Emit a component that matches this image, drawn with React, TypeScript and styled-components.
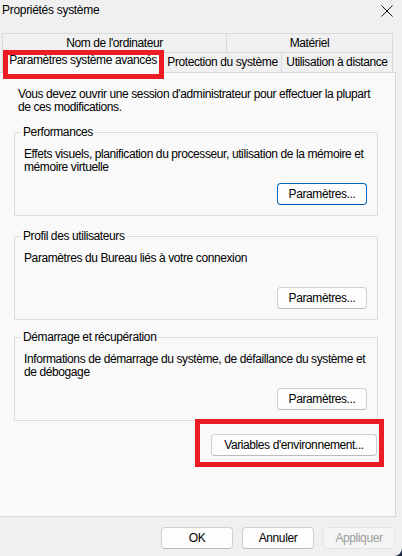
import styled, { createGlobalStyle } from 'styled-components';

const GlobalStyle = createGlobalStyle`
  html, body {
    margin: 0;
    padding: 0;
    background: #1e2a44;
  }
  body {
    font-family: 'Liberation Sans', Arial, sans-serif;
    font-size: 12px;
    letter-spacing: -0.4px;
    color: #000;
  }
`;

const groups = [
  {
    title: 'Performances',
    text: 'Effets visuels, planification du processeur, utilisation de la mémoire et mémoire virtuelle',
    mt: 12,
    focused: true,
  },
  {
    title: 'Profil des utilisateurs',
    text: 'Paramètres du Bureau liés à votre connexion',
    mt: 14,
    focused: false,
  },
  {
    title: 'Démarrage et récupération',
    text: 'Informations de démarrage du système, de défaillance du système et de débogage',
    mt: 11,
    focused: false,
  },
];

const App = () => {
  return (
    <Window>
      <GlobalStyle />
      <TitleBar>
        <Title>Propriétés système</Title>
        <Close aria-label="Fermer">
          <svg width="12" height="12" viewBox="0 0 12 12">
            <path d="M0.5 0.5 L11.5 11.5 M11.5 0.5 L0.5 11.5" stroke="#1a1a1a" strokeWidth="1" fill="none" />
          </svg>
        </Close>
      </TitleBar>

      <TabStrip>
        <TabRow>
          <Tab $w={225}>Nom de l'ordinateur</Tab>
          <Tab $w={167}>Matériel</Tab>
        </TabRow>
        <TabRow>
          <Tab $w={162} $active>Paramètres système avancés</Tab>
          <Tab $w={119}>Protection du système</Tab>
          <Tab $w={112}>Utilisation à distance</Tab>
        </TabRow>
      </TabStrip>

      <Panel>
        <Intro>
          Vous devez ouvrir une session d'administrateur pour effectuer la plupart
          <br />
          de ces modifications.
        </Intro>

        {groups.map((g) => (
          <GroupBox key={g.title} $mt={g.mt}>
            <Legend>{g.title}</Legend>
            <Description>{g.text}</Description>
            <ButtonRow>
              <Button $w={90} $focused={g.focused}>Paramètres...</Button>
            </ButtonRow>
          </GroupBox>
        ))}

        <EnvRow>
          <Button $w={166}>Variables d'environnement...</Button>
        </EnvRow>
      </Panel>

      <Footer>
        <Button $w={72}>OK</Button>
        <Button $w={72}>Annuler</Button>
        <Button $w={72} disabled>
          Appliquer
        </Button>
      </Footer>

      <Highlight $x={3} $y={50} $w={161} $h={29} />
      <Highlight $x={195} $y={419} $w={189} $h={48} />
    </Window>
  );
};

export default App;

const Window = styled.div`
  position: relative;
  width: 402px;
  height: 556px;
  background: #f0f0f0;
  border-bottom-right-radius: 8px;
  overflow: hidden;
  display: flex;
  flex-direction: column;
`;

const TitleBar = styled.div`
  height: 33px;
  display: flex;
  justify-content: space-between;
  align-items: flex-start;
  padding: 3px 9px 0 2px;
  box-sizing: border-box;
`;

const Title = styled.div`
  line-height: 14px;
  letter-spacing: -0.3px;
`;

const Close = styled.div`
  width: 12px;
  height: 12px;
  margin-top: 2px;
  display: flex;

  svg {
    display: block;
  }
`;

const TabStrip = styled.div`
  display: flex;
  flex-direction: column;
  padding-left: 2px;
`;

const TabRow = styled.div`
  display: flex;
  align-items: flex-start;
  height: 19px;

  & + & {
    height: 20px;
  }
`;

const Tab = styled.div<{ $w: number; $active?: boolean }>`
  box-sizing: border-box;
  width: ${(p) => p.$w}px;
  height: ${(p) => (p.$active ? 23 : 20)}px;
  margin-left: -1px;
  border: 1px solid #d9d9d9;
  border-bottom: none;
  background: ${(p) => (p.$active ? '#f9f9f9' : '#f0f0f0')};
  display: flex;
  align-items: center;
  justify-content: center;
  line-height: 13px;
  white-space: nowrap;
  position: relative;
  z-index: ${(p) => (p.$active ? 1 : 0)};
  margin-top: ${(p) => (p.$active ? -2 : 0)}px;
  padding-bottom: ${(p) => (p.$active ? 3 : 0)}px;

  &:first-child {
    margin-left: 0;
  }
`;

const Panel = styled.div`
  box-sizing: border-box;
  width: 396px;
  height: 445px;
  background: #f9f9f9;
  border-top: 1px solid #d9d9d9;
  border-right: 1px solid #d9d9d9;
  border-bottom: 1px solid #d9d9d9;
  padding: 15px 17px 0 14px;
  display: flex;
  flex-direction: column;
`;

const Intro = styled.p`
  margin: 0 0 0 4px;
  line-height: 13px;
`;

const GroupBox = styled.fieldset<{ $mt: number }>`
  margin: ${(p) => p.$mt}px 0 0;
  min-width: 0;
  padding: 9px 8px 10px 9px;
  border: 1px solid #dcdcdc;
  display: flex;
  flex-direction: column;
`;

const Legend = styled.legend`
  padding: 0 2px;
  margin-left: -3px;
  line-height: 13px;
`;

const Description = styled.div`
  min-height: 26px;
  line-height: 13px;
`;

const ButtonRow = styled.div`
  display: flex;
  justify-content: flex-end;
  margin: 9px 2px 0 0;
`;

const EnvRow = styled.div`
  display: flex;
  justify-content: flex-end;
  margin: 13px 1px 0 0;
`;

const Button = styled.button<{ $w: number; $focused?: boolean }>`
  box-sizing: border-box;
  width: ${(p) => p.$w}px;
  height: 22px;
  padding: 0;
  font: inherit;
  letter-spacing: inherit;
  color: #000;
  background: #fdfdfd;
  border: 1px solid ${(p) => (p.$focused ? '#0067c0' : '#d0d0d0')};
  border-bottom-color: ${(p) => (p.$focused ? '#0059a8' : '#bcbcbc')};
  border-radius: 4px;

  &:disabled {
    color: #9d9d9d;
    background: #f5f5f5;
    border-color: #e5e5e5;
  }
`;

const Footer = styled.div`
  display: flex;
  justify-content: flex-end;
  gap: 9px;
  padding: 10px 7px 0 0;
`;

const Highlight = styled.div<{ $x: number; $y: number; $w: number; $h: number }>`
  position: absolute;
  left: ${(p) => p.$x}px;
  top: ${(p) => p.$y}px;
  width: ${(p) => p.$w}px;
  height: ${(p) => p.$h}px;
  box-sizing: border-box;
  border: 5px solid #ed1c24;
  pointer-events: none;
  z-index: 2;
`;
